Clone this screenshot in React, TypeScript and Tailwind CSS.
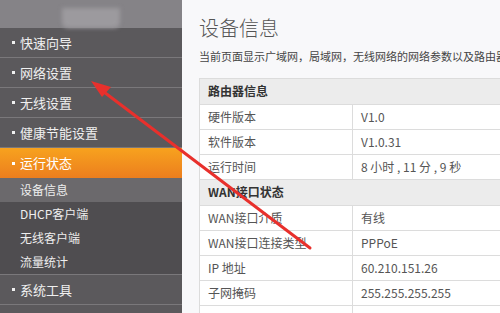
const font = { fontFamily: '"Noto Sans CJK SC", "Liberation Sans", sans-serif' };

const MENU = [
  { name: '快速向导' },
  { name: '网络设置' },
  { name: '无线设置' },
  { name: '健康节能设置' },
];

const SUB = ['设备信息', 'DHCP客户端', '无线客户端', '流量统计'];

const ROUTER_ROWS = [
  ['硬件版本', 'V1.0'],
  ['软件版本', 'V1.0.31'],
  ['运行时间', '8 小时 , 11 分 , 9 秒'],
];

const WAN_ROWS = [
  ['WAN接口介质', '有线'],
  ['WAN接口连接类型', 'PPPoE'],
  ['IP 地址', '60.210.151.26'],
  ['子网掩码', '255.255.255.255'],
  ['', ''],
];

function MenuItem({ name }: { name: string }) {
  return (
    <div className="h-[30px] flex items-center pl-[12px] gap-[5px] border-b border-[#7a787b] text-[13px] text-[#f0f0f0]">
      <span className="w-[3px] h-[3px] bg-[#f0f0f0]" />
      {name}
    </div>
  );
}

function Row({ k, v }: { k: string; v: string }) {
  return (
    <div className="flex h-[25px] border-b border-[#dcdcdc] text-[12px] text-[#555]">
      <div className="w-[153px] border-r border-[#dcdcdc] pl-[8px] flex items-center">{k}</div>
      <div className="flex-1 pl-[8px] flex items-center">{v}</div>
    </div>
  );
}

function Header({ title }: { title: string }) {
  return (
    <div className="h-[26px] flex items-center pl-[8px] bg-[#ececec] border-b border-[#dcdcdc] text-[12px] font-bold text-[#333]">
      {title}
    </div>
  );
}

export default function App() {
  return (
    <div className="relative w-[500px] h-[313px] overflow-hidden flex bg-[#f8f8fa]" style={font}>
      <aside className="w-[182px] shrink-0 bg-[#5b595c] flex flex-col">
        <div className="h-[28px] bg-[#858387] flex items-end justify-center">
          <div className="w-[58px] h-[20px] bg-[#9c9a9e] rounded-b-[6px] blur-[2px]" />
        </div>
        {MENU.map(m => (
          <MenuItem key={m.name} name={m.name} />
        ))}
        <div className="h-[30px] flex items-center pl-[12px] gap-[5px] bg-gradient-to-b from-[#f7a21e] to-[#ec7e1e] text-[13px] text-white">
          <span className="w-[3px] h-[3px] bg-white" />
          运行状态
        </div>
        <div className="bg-[#4f4d50] border-b border-[#7a787b]">
          {SUB.map((s, i) => (
            <div
              key={s}
              className={`h-[24px] flex items-center pl-[20px] text-[12px] text-[#eeeeee] ${i === 0 ? 'bg-[#6b696c]' : ''}`}
            >
              {s}
            </div>
          ))}
        </div>
        <MenuItem name="系统工具" />
      </aside>

      <main className="flex-1 min-w-0 pl-[17px] pt-[14px]">
        <h1 className="text-[20px] font-light text-[#555] leading-[28px]">设备信息</h1>
        <p className="mt-[6px] text-[11px] text-[#444] whitespace-nowrap overflow-hidden">
          当前页面显示广域网，局域网，无线网络的网络参数以及路由器的
        </p>
        <div className="mt-[13px] border-l border-t border-[#dcdcdc] bg-white">
          <Header title="路由器信息" />
          {ROUTER_ROWS.map(([k, v]) => (
            <Row key={k} k={k} v={v} />
          ))}
          <Header title="WAN接口状态" />
          {WAN_ROWS.map(([k, v], i) => (
            <Row key={i} k={k} v={v} />
          ))}
        </div>
      </main>

      <svg className="absolute inset-0 pointer-events-none" width="500" height="313">
        <line x1="310" y1="248" x2="100" y2="89" stroke="#e8302c" strokeWidth="3" strokeLinecap="round" />
        <polygon points="91,81 111,87 102,97" fill="#e8302c" />
      </svg>
    </div>
  );
}
